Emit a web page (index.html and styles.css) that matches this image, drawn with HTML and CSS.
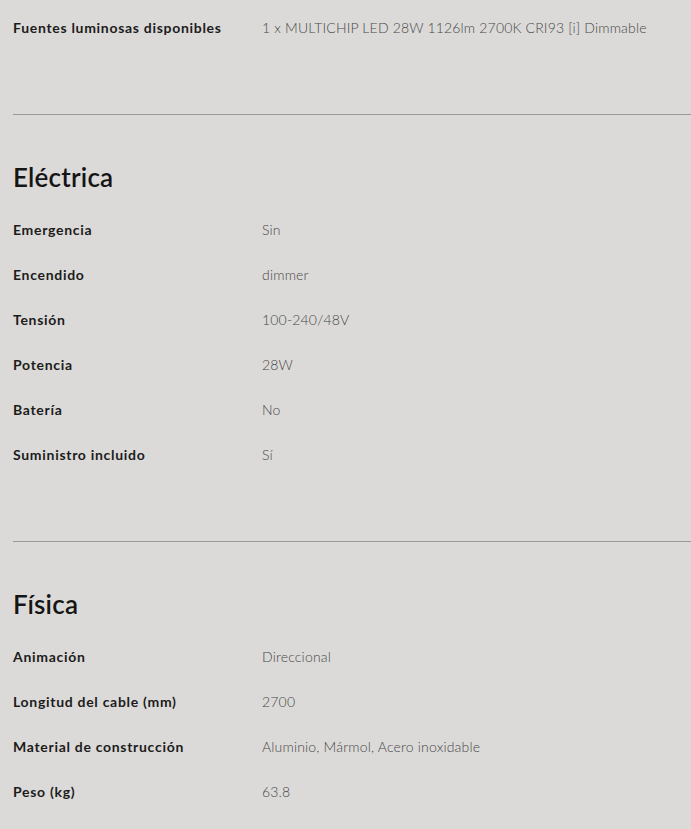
FILE: index.html
```html
<!DOCTYPE html>
<html lang="es">
<head>
<meta charset="utf-8">
<title>Especificaciones</title>
<link rel="stylesheet" href="styles.css">
</head>
<body>
<main class="specs">
  <section class="group group-first">
    <div class="row"><span class="label">Fuentes luminosas disponibles</span><span class="value">1 x MULTICHIP LED 28W 1126lm 2700K CRI93 [i] Dimmable</span></div>
  </section>
  <section class="group">
    <h2 class="title">Eléctrica</h2>
    <div class="row"><span class="label">Emergencia</span><span class="value">Sin</span></div>
    <div class="row"><span class="label">Encendido</span><span class="value">dimmer</span></div>
    <div class="row"><span class="label">Tensión</span><span class="value">100-240/48V</span></div>
    <div class="row"><span class="label">Potencia</span><span class="value">28W</span></div>
    <div class="row"><span class="label">Batería</span><span class="value">No</span></div>
    <div class="row"><span class="label">Suministro incluido</span><span class="value">Sí</span></div>
  </section>
  <section class="group">
    <h2 class="title">Física</h2>
    <div class="row"><span class="label">Animación</span><span class="value">Direccional</span></div>
    <div class="row"><span class="label">Longitud del cable (mm)</span><span class="value">2700</span></div>
    <div class="row"><span class="label">Material de construcción</span><span class="value">Aluminio, Mármol, Acero inoxidable</span></div>
    <div class="row"><span class="label">Peso (kg)</span><span class="value">63.8</span></div>
  </section>
</main>
</body>
</html>
```

FILE: styles.css
```css
html, body {
  margin: 0;
  padding: 0;
  background: #dbdad8;
}
body {
  font-family: "Lato", "Open Sans", sans-serif;
  color: #1c1c1c;
}
.specs {
  padding: 6px 0 0 13px;
}
.group {
  padding-bottom: 63px;
  border-bottom: 1px solid #9a9a9a;
}
.group + .group {
  padding-top: 46px;
}
.title {
  margin: 0 0 15px;
  font-size: 26px;
  line-height: 32px;
  font-weight: 600;
  letter-spacing: 0.2px;
  color: #151515;
}
.row {
  display: flex;
  align-items: center;
  box-sizing: border-box;
  height: 45px;
  padding-bottom: 2px;
}
.label {
  width: 249px;
  flex: none;
  font-size: 14px;
  font-weight: 700;
  letter-spacing: 0.7px;
  color: #1c1c1c;
}
.value {
  font-size: 14px;
  font-weight: 300;
  letter-spacing: 0.18px;
  color: #484848;
}
```
